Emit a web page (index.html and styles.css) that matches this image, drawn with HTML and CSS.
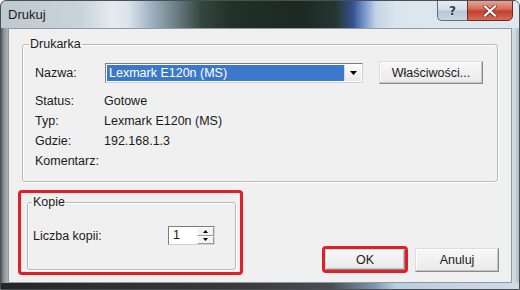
FILE: index.html
```html
<!DOCTYPE html>
<html lang="pl">
<head>
<meta charset="utf-8">
<title>Drukuj</title>
<link rel="stylesheet" href="styles.css">
</head>
<body>
<div class="window">
  <div class="titlebar">
    <span class="title">Drukuj</span>
    <div class="caption-buttons">
      <span class="cap-help">?</span>
      <span class="cap-close">
        <svg width="14" height="12" viewBox="0 0 14 12"><path d="M2 1.5 L12 10.5 M12 1.5 L2 10.5" stroke="#5a2a24" stroke-width="3.6" stroke-linecap="square"/><path d="M2 1.5 L12 10.5 M12 1.5 L2 10.5" stroke="#ffffff" stroke-width="2.2" stroke-linecap="square"/></svg>
      </span>
    </div>
  </div>
  <div class="client">
    <fieldset class="group printer">
      <legend>Drukarka</legend>
      <div class="name-row">
        <span class="label">Nazwa:</span>
        <div class="combo">
          <span class="combo-value">Lexmark E120n (MS)</span>
          <span class="combo-arrow"><svg width="7" height="4" viewBox="0 0 7 4"><path d="M0 0 H7 L3.5 4 Z" fill="#000"/></svg></span>
        </div>
        <button class="btn btn-props">Właściwości...</button>
      </div>
      <div class="info">
        <span class="label">Status:</span><span>Gotowe</span>
        <span class="label">Typ:</span><span>Lexmark E120n (MS)</span>
        <span class="label">Gdzie:</span><span>192.168.1.3</span>
        <span class="label">Komentarz:</span><span></span>
      </div>
    </fieldset>
    <div class="bottom">
      <div class="highlight copies-hl">
        <fieldset class="group copies">
          <legend>Kopie</legend>
          <div class="copies-row">
            <span class="copies-label">Liczba kopii:</span>
            <div class="spin">
              <span class="spin-value">1</span>
              <span class="spin-btns">
                <span class="spin-btn"><svg width="5" height="3" viewBox="0 0 5 3"><path d="M0 3 H5 L2.5 0 Z" fill="#000"/></svg></span>
                <span class="spin-btn"><svg width="5" height="3" viewBox="0 0 5 3"><path d="M0 0 H5 L2.5 3 Z" fill="#000"/></svg></span>
              </span>
            </div>
          </div>
        </fieldset>
      </div>
      <div class="actions">
        <div class="highlight ok-hl"><button class="btn btn-ok">OK</button></div>
        <button class="btn btn-cancel">Anuluj</button>
      </div>
    </div>
  </div>
</div>
</body>
</html>
```
FILE: styles.css
```css
* { box-sizing: border-box; }
html, body { margin: 0; padding: 0; }
body {
  width: 520px;
  height: 290px;
  overflow: hidden;
  font-family: "Liberation Sans", Arial, sans-serif;
  font-size: 12.5px;
  color: #1a1a1a;
  background: #ffffff;
}
.window {
  width: 520px;
  height: 290px;
  display: flex;
  flex-direction: column;
  border: 1px solid #4a4f55;
  border-radius: 6px 6px 0 0;
  overflow: hidden;
  background:
    linear-gradient(to right, #262626 0, #3a3a3a 240px, #4a4e52 330px, #7d93ab 372px, #bccde0 395px, #cfdbe6 519px) left bottom / 100% 6px no-repeat,
    linear-gradient(to right, #55595d 0, #8e969c 3px, #aab2b8 7px, #b9c1c7 30px, #c8d3dc 500px, #d2dde6 513px, #a9b5bf 519px);
}
.titlebar {
  height: 27px;
  flex: none;
  display: flex;
  align-items: flex-start;
  justify-content: space-between;
  background: linear-gradient(to right,
    #bdc8cf 0, #c9d3da 80px, #e4ecf0 112px, #d9e3ea 128px, #9fb2c1 150px,
    #6b7f86 175px, #34463e 200px, #22302a 230px, #1c2923 300px, #253631 335px,
    #37528e 352px, #6c8fc8 362px, #c3d4e6 375px, #dbe5ed 395px, #dfe8ef 519px);
}
.title {
  margin: 7px 0 0 7px;
  font-size: 13px;
  color: #1c1c1c;
  line-height: 14px;
}
.caption-buttons {
  display: flex;
  margin-right: 6px;
  margin-top: -1px;
}
.cap-help {
  width: 30px;
  height: 21px;
  display: flex;
  align-items: center;
  justify-content: center;
  border: 1px solid #5e6d7b;
  border-right: none;
  border-radius: 0 0 0 5px;
  background: linear-gradient(to bottom, #e6edf2 0, #d3dde6 45%, #b8c7d4 55%, #c9d6e0 100%);
  color: #2a3440;
  font-family: "DejaVu Sans", sans-serif;
  font-weight: bold;
  font-size: 12px;
  text-shadow: 0 0 2px #fff;
}
.cap-close {
  width: 46px;
  height: 21px;
  display: flex;
  align-items: center;
  justify-content: center;
  border: 1px solid #6e2a22;
  border-radius: 0 0 5px 0;
  background: linear-gradient(to bottom, #e6a296 0, #d6705f 40%, #c2402e 55%, #d86b57 100%);
}
.client {
  margin: 0 7px;
  height: 255px;
  flex: none;
  background: #f0f0f0;
  border: 1px solid #8e9aa5;
  display: flex;
  flex-direction: column;
}
.group {
  margin: 0;
  border: 1px solid #b9b9b9;
  border-radius: 3px;
  box-shadow: inset 1px 1px 0 #ffffff, 1px 1px 0 #ffffff;
}
.group legend {
  padding: 0 1px;
  line-height: 15px;
}
.printer {
  margin: 8px 0 0 13px;
  width: 476px;
  padding: 9px 12px 10px 12px;
}
.printer legend {
  margin-left: -6px;
}
.name-row {
  display: flex;
  align-items: center;
  height: 23px;
}
.label {
  width: 69px;
  flex: none;
}
.combo {
  width: 258px;
  height: 20px;
  margin-left: 1px;
  display: flex;
  border: 1px solid;
  border-color: #7c7c7c #d0d0d0 #d0d0d0 #7c7c7c;
  background: #ffffff;
  padding: 1px;
}
.combo-value {
  flex: 1;
  background: #3b78cb;
  color: #ffffff;
  padding-left: 2px;
  line-height: 16px;
}
.combo-arrow {
  width: 17px;
  flex: none;
  display: flex;
  align-items: center;
  justify-content: center;
  background: linear-gradient(to bottom, #fbfbfb, #e9e9e9);
  border-left: 1px solid #d6d6d6;
}
.btn {
  font-family: inherit;
  font-size: 12.5px;
  color: #1a1a1a;
  padding: 0;
  border: 1px solid;
  border-color: #dcdcdc #8a8a8a #8a8a8a #dcdcdc;
  background: linear-gradient(to bottom, #f7f7f7, #eaeaea);
  box-shadow: inset -1px -1px 0 #c4c4c4, inset 1px 1px 0 #ffffff;
}
.btn-props {
  width: 104px;
  height: 23px;
  margin-left: 16px;
}
.info {
  display: grid;
  grid-template-columns: 69px 1fr;
  grid-auto-rows: 20px;
  align-items: center;
  margin-top: 7px;
}
.bottom {
  display: flex;
  align-items: flex-end;
  margin-top: 8px;
}
.highlight {
  border: 3px solid #e11f26;
  border-radius: 4px;
}
.copies-hl {
  margin-left: 9px;
  width: 225px;
  height: 85px;
  padding: 2px 4px 2px 6px;
}
.copies {
  width: 209px;
  height: 75px;
  padding: 16px 5px 0 5px;
}
.copies legend {
  margin-left: -1px;
}
.copies-row {
  display: flex;
  align-items: center;
}
.copies-label {
  width: 135px;
  flex: none;
}
.spin {
  width: 47px;
  height: 19px;
  display: flex;
  border: 1px solid;
  border-color: #7c7c7c #d0d0d0 #d0d0d0 #7c7c7c;
  background: #ffffff;
}
.spin-value {
  flex: 1;
  padding-left: 4px;
  line-height: 17px;
}
.spin-btns {
  width: 17px;
  display: flex;
  flex-direction: column;
}
.spin-btn {
  flex: 1;
  display: flex;
  align-items: center;
  justify-content: center;
  background: #f2f2f2;
  border: 1px solid;
  border-color: #ffffff #9a9a9a #9a9a9a #ffffff;
}
.actions {
  margin-left: auto;
  margin-right: 12px;
  margin-bottom: 2px;
  display: flex;
  align-items: flex-end;
}
.ok-hl {
  width: 86px;
  height: 27px;
}
.btn-ok {
  width: 80px;
  height: 21px;
  display: block;
}
.btn-cancel {
  width: 84px;
  height: 24px;
  margin-left: 7px;
  margin-bottom: 1px;
}
```
